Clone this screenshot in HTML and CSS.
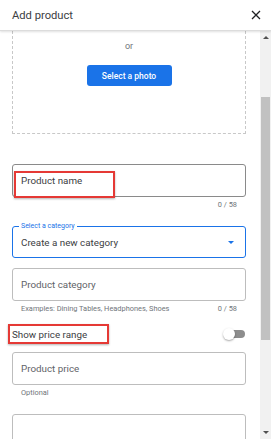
FILE: index.html
```html
<!DOCTYPE html>
<html lang="en">
  <head>
    <meta charset="UTF-8" />
    <meta name="viewport" content="width=device-width, initial-scale=1.0" />
    <title>Add product</title>
    <link rel="stylesheet" href="styles.css">
  </head>
  <body>
    <header class="dialog-head">
      <h1 class="dialog-title">Add product</h1>
      <svg class="close-icon" viewBox="0 0 10 10" width="10" height="10">
        <path d="M1 1 L9 9 M9 1 L1 9" stroke="#202124" stroke-width="1.3" fill="none" />
      </svg>
    </header>

    <div class="dialog-body">
      <main class="form">
        <div class="drop-zone">
          <p class="drop-or">or</p>
          <button class="btn-photo">Select a photo</button>
        </div>

        <div class="field field--name">
          <span class="field__text">Product name</span>
          <div class="mark mark--name"></div>
        </div>
        <div class="hint"><span></span><span>0 / 58</span></div>

        <div class="field field--select">
          <span class="field__label">Select a category</span>
          <span class="field__text">Create a new category</span>
          <span class="caret"></span>
        </div>

        <div class="field field--category">
          <span class="field__text field__text--muted">Product category</span>
        </div>
        <div class="hint"><span>Examples: Dining Tables, Headphones, Shoes</span><span>0 / 58</span></div>

        <div class="switch-row">
          <span class="switch-row__text">Show price range</span>
          <div class="mark mark--range"></div>
          <div class="toggle"><span class="toggle__knob"></span></div>
        </div>

        <div class="field field--price">
          <span class="field__text field__text--muted">Product price</span>
        </div>
        <div class="hint"><span>Optional</span></div>

        <div class="field field--desc"></div>
      </main>

      <div class="scrollbar">
        <span class="scrollbar__arrow scrollbar__arrow--up"></span>
        <div class="scrollbar__track">
          <div class="scrollbar__thumb"></div>
        </div>
        <span class="scrollbar__arrow scrollbar__arrow--down"></span>
      </div>
    </div>
  </body>
</html>
```

FILE: styles.css
```css
* {
  box-sizing: border-box;
}
body {
  margin: 0;
  width: 271px;
  height: 439px;
  overflow: hidden;
  background: #fff;
  font-family: Roboto, "Liberation Sans", sans-serif;
  color: #3c4043;
}
.dialog-head {
  position: relative;
  z-index: 2;
  height: 31px;
  padding: 0 10px 0 12px;
  display: flex;
  align-items: center;
  justify-content: space-between;
  border-bottom: 1px solid #dcdcdc;
  box-shadow: 0 1px 2px rgba(0, 0, 0, 0.12);
}
.dialog-title {
  margin: 0;
  font-size: 11.2px;
  font-weight: 400;
  color: #3c4043;
}
.close-icon {
  display: block;
}
.dialog-body {
  display: flex;
  height: 408px;
}
.form {
  width: 260px;
  padding: 0 14px 0 12px;
}
.drop-zone {
  height: 103px;
  border: 1px dashed #c8c8c8;
  border-top: none;
  display: flex;
  flex-direction: column;
  align-items: center;
}
.drop-or {
  margin: 10px 0 0;
  font-size: 9px;
  color: #70757a;
}
.btn-photo {
  margin-top: 14px;
  width: 85px;
  height: 21px;
  border: none;
  border-radius: 3px;
  background: #1a73e8;
  color: #fff;
  font-family: Roboto, "Liberation Sans", sans-serif;
  font-size: 8.5px;
  font-weight: 500;
  padding: 0;
}
.field {
  position: relative;
  height: 33px;
  border: 1px solid #bdbdbd;
  border-radius: 3px;
  display: flex;
  align-items: center;
  padding: 0 8px;
}
.field__text {
  font-size: 9.8px;
  color: #3c4043;
}
.field__text--muted {
  color: #5f6368;
}
.field--name {
  margin-top: 30px;
  border-color: #8a8a8a;
}
.field--select {
  margin-top: 15px;
  height: 32px;
  border-color: #1a73e8;
}
.field__label {
  position: absolute;
  left: 6px;
  top: -5px;
  padding: 0 2px;
  background: #fff;
  font-size: 7px;
  line-height: 9px;
  color: #1a73e8;
}
.caret {
  position: absolute;
  right: 11px;
  top: 14px;
  border-left: 3.5px solid transparent;
  border-right: 3.5px solid transparent;
  border-top: 3.5px solid #1a73e8;
}
.field--category {
  margin-top: 10px;
}
.hint {
  height: 14px;
  padding: 0 9px;
  display: flex;
  justify-content: space-between;
  align-items: center;
  font-size: 7.4px;
  color: #70757a;
}
.switch-row {
  position: relative;
  margin-top: 9px;
  height: 20px;
  display: flex;
  align-items: center;
  justify-content: space-between;
}
.switch-row__text {
  font-size: 9.8px;
  color: #3c4043;
}
.toggle {
  position: relative;
  width: 21px;
  height: 8px;
  margin-right: 1px;
  border-radius: 4px;
  background: #8d8d8d;
}
.toggle__knob {
  position: absolute;
  left: -1px;
  top: -2px;
  width: 12px;
  height: 12px;
  border-radius: 50%;
  background: #fff;
  box-shadow: 0 1px 2px rgba(0, 0, 0, 0.35);
}
.field--price {
  margin-top: 8px;
}
.field--desc {
  margin-top: 15px;
  height: 40px;
}
/* annotation boxes */
.mark {
  position: absolute;
  border: 2px solid #e53935;
  box-shadow: 0 1px 2px rgba(0, 0, 0, 0.3);
}
.mark--name {
  left: 1px;
  top: 6px;
  width: 101px;
  height: 27px;
}
.mark--range {
  left: -4px;
  top: 0;
  width: 101px;
  height: 20px;
}
.scrollbar {
  width: 11px;
  background: #f1f1f1;
  display: flex;
  flex-direction: column;
  align-items: center;
}
.scrollbar__arrow {
  flex: none;
  width: 0;
  height: 0;
  margin: 5px 0;
  border-left: 3px solid transparent;
  border-right: 3px solid transparent;
}
.scrollbar__arrow--up {
  border-bottom: 3px solid #505050;
}
.scrollbar__arrow--down {
  border-top: 3px solid #505050;
}
.scrollbar__track {
  flex: 1;
  width: 100%;
  padding: 53px 1px 86px;
}
.scrollbar__thumb {
  height: 100%;
  background: #c1c1c1;
}
```
